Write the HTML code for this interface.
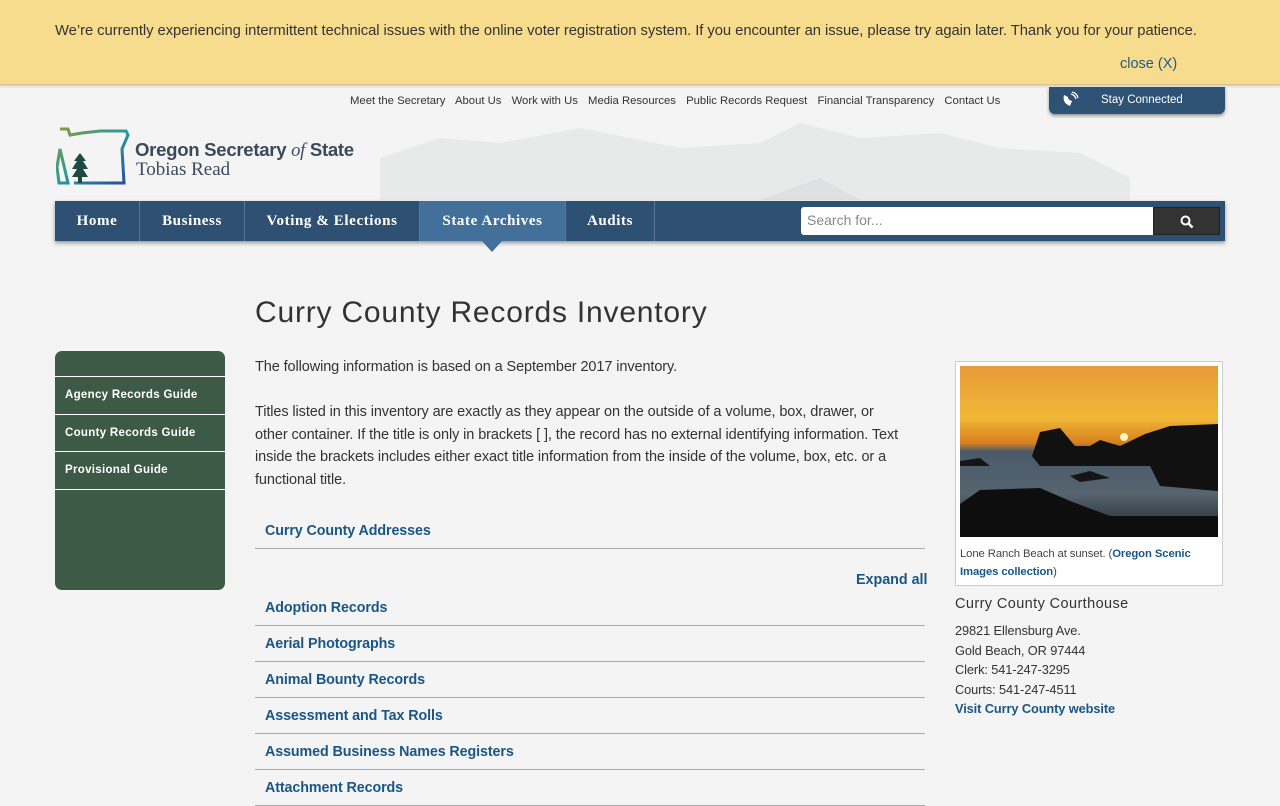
<!DOCTYPE html>
<html><head><meta charset="utf-8">
<style>
*{box-sizing:border-box;margin:0;padding:0}
body{width:1280px;height:800px;overflow:hidden;background:#f4f4f4;font-family:"Liberation Sans",sans-serif;color:#333;position:relative}
.banner{position:absolute;left:0;top:0;width:1280px;height:85px;background:#f7dc8e;border-bottom:1px solid #d8c48a;box-shadow:0 1px 3px rgba(0,0,0,.2)}
.banner p{position:absolute;left:55px;top:23px;font-size:14.8px;color:#333;letter-spacing:-.05px;white-space:nowrap}
.banner a{position:absolute;left:1120px;top:56px;font-size:14.5px;color:#1e5a8c}
.util{position:absolute;top:95px;left:350px;font-size:11.3px;color:#333;white-space:nowrap}
.util span{margin-right:7px}
.stay{position:absolute;left:1049px;top:87px;width:176px;height:27px;background:#2d5273;border-radius:0 0 6px 6px;color:#fff;font-size:11.5px;box-shadow:0 2px 3px rgba(0,0,0,.4)}
.stay b{position:absolute;left:52px;top:7px;font-weight:normal}
.mtn{position:absolute;left:380px;top:118px;width:750px;height:82px;opacity:.18}
.logo{position:absolute;left:56px;top:127px}
.lt1{position:absolute;left:135px;top:139px;font-size:18.6px;font-weight:bold;color:#3b4a5a;letter-spacing:-.3px}
.lt1 i{font-family:"Liberation Serif",serif;font-weight:normal}
.lt2{position:absolute;left:136px;top:159px;font-size:19px;font-family:"Liberation Serif",serif;color:#3b4a5a}
.nav{position:absolute;left:55px;top:201px;width:1170px;height:40px;background:#2e5072;box-shadow:0 2px 4px rgba(0,0,0,.4)}
.nav div{position:absolute;top:0;height:40px;line-height:40px;color:#fff;font-family:"Liberation Serif",serif;font-size:15px;font-weight:bold;letter-spacing:.6px;text-align:center;border-right:1px solid #5c7792}
.nav .act{background:#42709a}
.tri{position:absolute;left:482px;top:241px;width:0;height:0;border-left:10px solid transparent;border-right:10px solid transparent;border-top:11px solid #42709a}
.search{position:absolute;left:801px;top:207px;width:353px;height:28px;background:#fff;border-radius:3px 0 0 3px;font-size:14px;color:#888;padding:5px 6px}
.sbtn{position:absolute;left:1153px;top:207px;width:67px;height:28px;background:#333;border:1px solid #222}
h1{position:absolute;left:255px;top:296px;font-size:30px;font-weight:normal;color:#333;letter-spacing:.8px}
.side{position:absolute;left:55px;top:351px;width:170px;height:239px;background:#3d5a46;border-radius:7px}
.side div{position:absolute;left:0;width:170px;border-top:1px solid #fff;color:#fff;font-size:11.5px;font-weight:bold;padding-left:10px;letter-spacing:.3px}
.main{position:absolute;left:255px;width:700px;font-size:14.5px;line-height:22.7px;color:#333;letter-spacing:-.1px;white-space:nowrap}
.acc{position:absolute;left:255px;width:670px;height:36px;border-bottom:1px solid #aaa;color:#1a5685;font-weight:bold;font-size:14.3px;padding-left:10px;letter-spacing:-.1px}
.fig{position:absolute;left:955px;top:361px;width:268px;height:225px;background:#fff;border:1px solid #ccc}
.cap{position:absolute;left:4px;top:183px;font-size:11.3px;line-height:18px;color:#444;letter-spacing:-.1px}
.cap b,.lnk{color:#1a5685}
.addr{position:absolute;left:955px;top:621px;font-size:12.8px;line-height:19.5px;color:#333;letter-spacing:-.1px}
</style></head><body>
<div class="banner"><p>We’re currently experiencing intermittent technical issues with the online voter registration system. If you encounter an issue, please try again later. Thank you for your patience.</p><a>close (X)</a></div>

<svg class="mtn" viewBox="0 0 750 82"><path d="M0 40 L60 20 L120 25 L200 10 L300 30 L380 25 L420 5 L480 20 L560 15 L620 30 L700 35 L750 60 L750 82 L0 82Z" fill="#b8bfc2"/><path d="M380 82 L440 60 L480 82Z" fill="#7f8a8e"/></svg>
<div class="util"><span>Meet the Secretary</span> <span>About Us</span> <span>Work with Us</span> <span>Media Resources</span> <span>Public Records Request</span> <span>Financial Transparency</span> <span>Contact Us</span></div>
<div class="stay"><svg style="position:absolute;left:12px;top:4px" width="18" height="18" viewBox="0 0 18 18"><path d="M3 4 Q1 12 9 15 L11 10 Q7 9 7 6Z" fill="#fff"/><path d="M10 3 Q14 4 15 8 M11 1 Q16 2 17 7" stroke="#fff" fill="none" stroke-width="1.3"/></svg><b>Stay Connected</b></div>

<svg class="logo" width="74" height="60" viewBox="0 0 74 60"><defs><linearGradient id="g" x1="0" y1="0" x2="1" y2="1"><stop offset="0" stop-color="#8a9a3a"/><stop offset=".5" stop-color="#2a9a9a"/><stop offset="1" stop-color="#2a4aa0"/></linearGradient></defs><path d="M4 2 L12 2 L14 8 L26 6 L44 4 L70 4 L72 8 L66 22 L68 56 L18 56 M12 56 L3 56 L1 40 L4 22 Z" fill="none" stroke="url(#g)" stroke-width="3"/><path d="M24 26 L18 34 L21 34 L16 42 L21 42 L16 50 L22 50 L22 56 L26 56 L26 50 L32 50 L27 42 L32 42 L27 34 L30 34Z" fill="#1f4a42"/></svg>
<div class="lt1">Oregon Secretary <i>of</i> State</div>
<div class="lt2">Tobias Read</div>

<div class="nav">
<div style="left:0;width:85px">Home</div>
<div style="left:85px;width:105px">Business</div>
<div style="left:190px;width:175px">Voting &amp; Elections</div>
<div class="act" style="left:365px;width:146px">State Archives</div>
<div style="left:511px;width:89px">Audits</div>
</div>
<div class="tri"></div>
<div class="search">Search for...</div>
<div class="sbtn"><svg style="position:absolute;left:26px;top:7px" width="14" height="14" viewBox="0 0 14 14"><circle cx="5.5" cy="5.5" r="4" stroke="#fff" stroke-width="2" fill="none"/><path d="M8.5 8.5 L12.5 12.5" stroke="#fff" stroke-width="2.5"/></svg></div>

<h1>Curry County Records Inventory</h1>

<div class="side">
<div style="top:25px;height:38px;line-height:36px">Agency Records Guide</div>
<div style="top:63px;height:37px;line-height:36px">County Records Guide</div>
<div style="top:100px;height:38px;line-height:36px">Provisional Guide</div>
<div style="top:138px;height:1px"></div>
</div>

<div class="main" style="top:356px">The following information is based on a September 2017 inventory.</div>
<div class="main" style="top:401px">Titles listed in this inventory are exactly as they appear on the outside of a volume, box, drawer, or<br>other container. If the title is only in brackets [ ], the record has no external identifying information. Text<br>inside the brackets includes either exact title information from the inside of the volume, box, etc. or a<br>functional title.</div>

<div class="acc" style="top:513px;padding-top:10px">Curry County Addresses</div>
<div style="position:absolute;left:856px;top:572px;font-size:14.3px;font-weight:bold;color:#1a5685">Expand all</div>
<div class="acc" style="top:590px;padding-top:10px">Adoption Records</div>
<div class="acc" style="top:626px;padding-top:10px">Aerial Photographs</div>
<div class="acc" style="top:662px;padding-top:10px">Animal Bounty Records</div>
<div class="acc" style="top:698px;padding-top:10px">Assessment and Tax Rolls</div>
<div class="acc" style="top:734px;padding-top:10px">Assumed Business Names Registers</div>
<div class="acc" style="top:770px;padding-top:10px">Attachment Records</div>

<div class="fig">
<svg style="position:absolute;left:4px;top:4px" width="258" height="171" viewBox="0 0 258 171"><defs><linearGradient id="s" x1="0" y1="0" x2="0" y2="1"><stop offset="0" stop-color="#e89a3a"/><stop offset=".3" stop-color="#f0b836"/><stop offset=".45" stop-color="#d8801e"/><stop offset=".5" stop-color="#4a5a6a"/><stop offset=".75" stop-color="#56646e"/><stop offset="1" stop-color="#1a2228"/></linearGradient></defs><rect width="258" height="171" fill="url(#s)"/><circle cx="164" cy="71" r="4" fill="#fff6c0"/><path d="M72 90 L80 66 L100 62 L115 80 L130 80 L140 74 L160 80 L185 68 L210 60 L258 58 L258 125 L200 120 L190 100 L120 100 L80 100Z" fill="#111"/><path d="M0 171 L0 138 L20 124 L80 122 L110 135 L150 150 L258 150 L258 171Z" fill="#0e0e0e"/><path d="M0 95 L20 92 L30 100 L0 100Z" fill="#151515"/><path d="M110 110 L130 105 L150 112 L120 116Z" fill="#151515"/></svg>
<div class="cap">Lone Ranch Beach at sunset. (<b>Oregon Scenic<br>Images collection</b>)</div>
</div>
<div style="position:absolute;left:955px;top:596px;font-size:14.5px;letter-spacing:.4px;color:#333">Curry County Courthouse</div>
<div class="addr">29821 Ellensburg Ave.<br>Gold Beach, OR 97444<br>Clerk: 541-247-3295<br>Courts: 541-247-4511<br><b class="lnk">Visit Curry County website</b></div>
</body></html>
